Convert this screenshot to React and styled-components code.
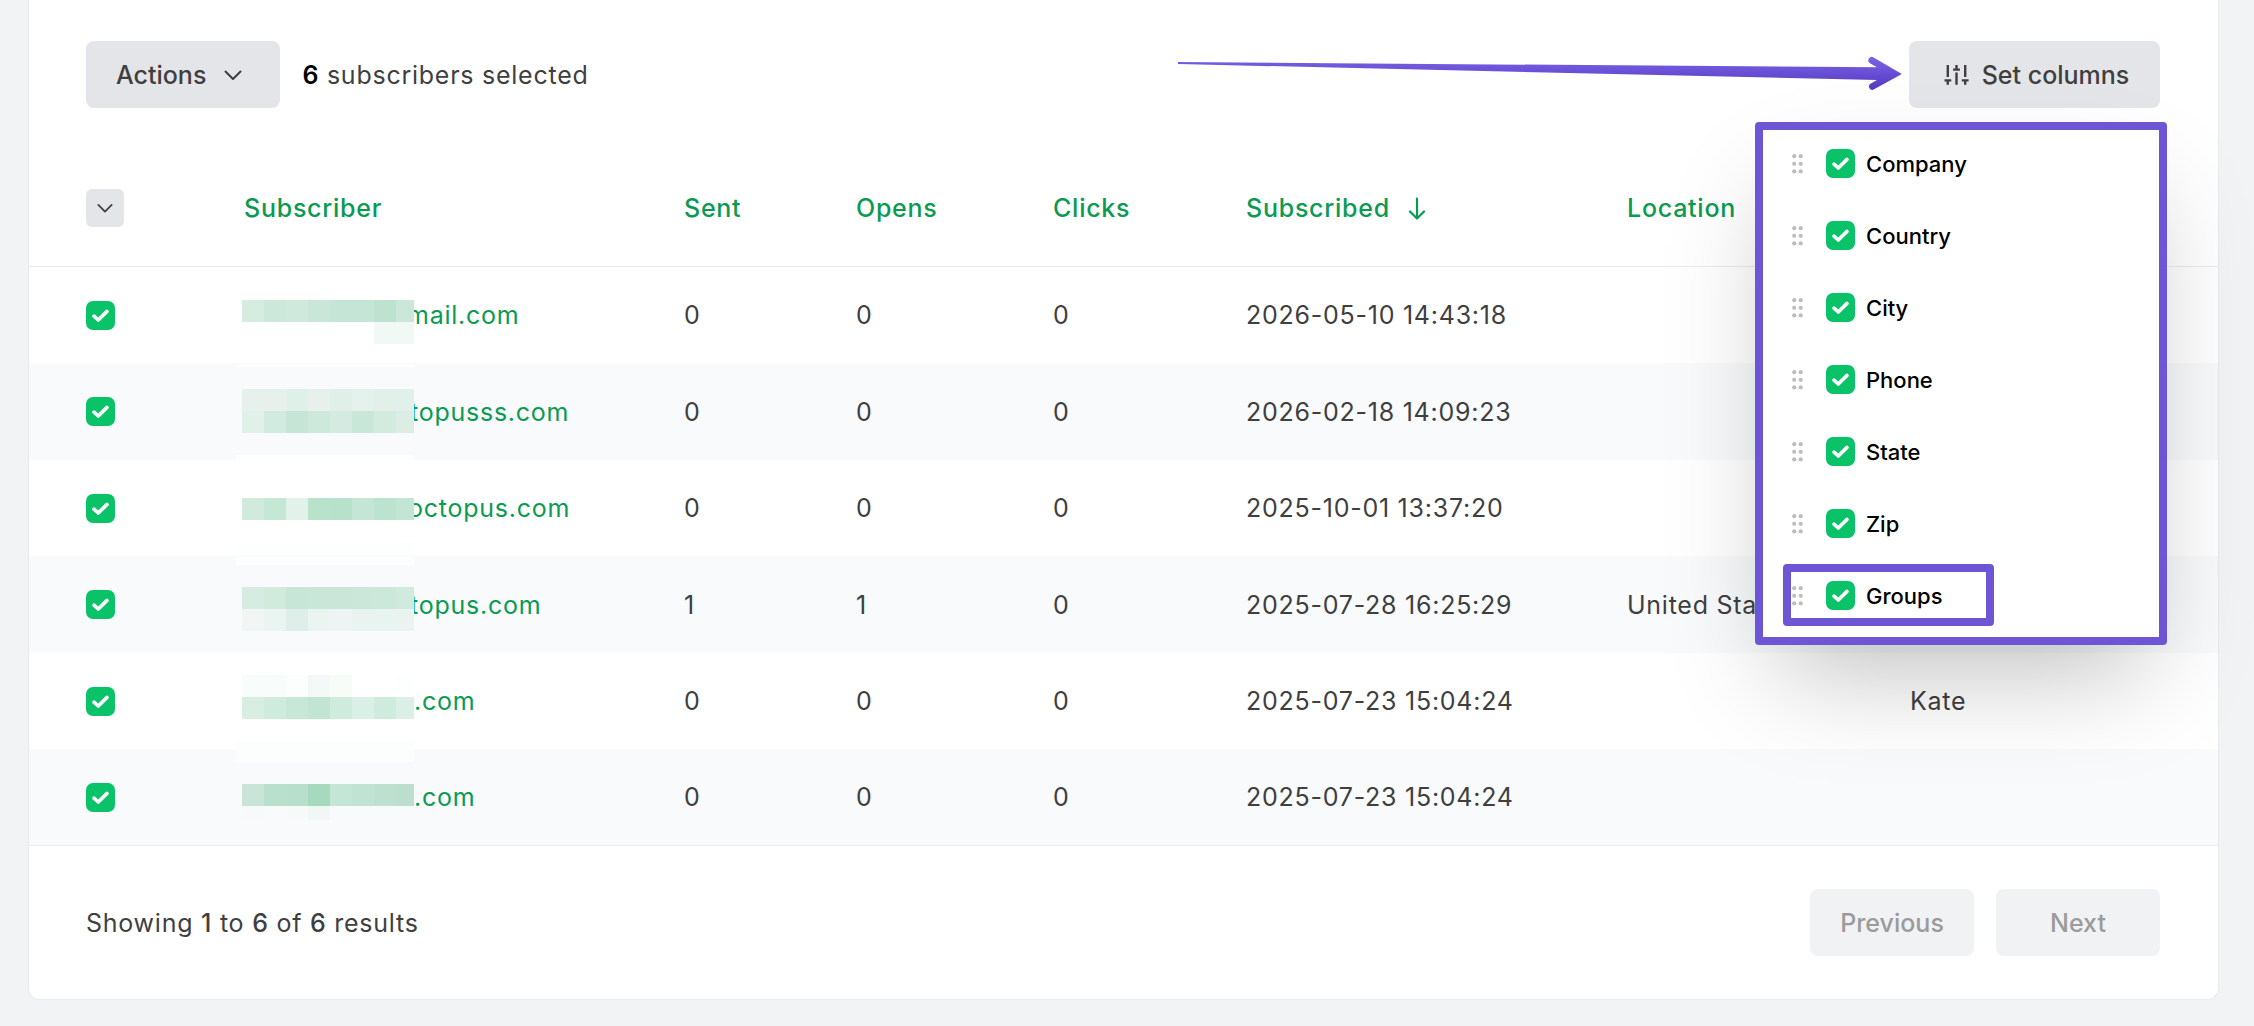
import React from "react";
import styled, { createGlobalStyle, css } from "styled-components";

const Global = createGlobalStyle`
  *, *::before, *::after { box-sizing: border-box; }
  body {
    margin: 0;
    background: #f2f3f5;
    color: #3f3f3f;
    font-family: Inter, "Liberation Sans", sans-serif;
    font-size: 25px;
    line-height: 32px;
  }
`;

const tracking = css`
  letter-spacing: 0.03em;
`;

const Page = styled.main`
  padding: 0 35px 27px 28px;
`;

const Card = styled.section`
  position: relative;
  background: #fff;
  border: 1px solid #e9eaec;
  border-top: 0;
  border-radius: 0 0 12px 12px;
`;

const Toolbar = styled.header`
  display: flex;
  align-items: center;
  justify-content: space-between;
  padding: 41px 58px 42px 57px;
`;

const Group = styled.div`
  display: flex;
  align-items: center;
  gap: 22px;
`;

const Button = styled.button`
  display: inline-flex;
  align-items: center;
  justify-content: center;
  gap: ${(p) => p.$gap || 14}px;
  height: 67px;
  min-width: ${(p) => p.$min || 164}px;
  padding: ${(p) => p.$pad || "0 30px"};
  border: 0;
  border-radius: 8px;
  background: #e4e5e9;
  color: #3f3f3f;
  font: 500 25px/32px Inter, "Liberation Sans", sans-serif;
  &:disabled {
    background: #f1f2f4;
    color: #9b9b9b;
  }
`;

const Summary = styled.p`
  margin: 0;
  ${tracking}
  strong {
    font-weight: 500;
  }
`;

const Selected = styled(Summary)`
  strong {
    font-weight: 600;
    color: #000;
  }
`;

const Table = styled.table`
  width: 100%;
  table-layout: fixed;
  border-collapse: separate;
  border-spacing: 0;
  ${tracking}
`;

const Col = styled.col`
  width: ${(p) => (p.$w ? `${p.$w}px` : "auto")};
`;

const Th = styled.th`
  height: 117px;
  padding: 0;
  border-bottom: 1px solid #e9eaec;
  text-align: left;
  font-weight: 500;
  white-space: nowrap;
  &:first-child {
    padding-left: 57px;
  }
`;

const SortLink = styled.a`
  display: inline-flex;
  align-items: center;
  gap: 18px;
  color: #0b9a52;
  text-decoration: none;
`;

const MenuToggle = styled.button`
  display: flex;
  align-items: center;
  justify-content: center;
  width: 38px;
  height: 38px;
  padding: 0;
  border: 0;
  border-radius: 6px;
  background: #e4e5e9;
  color: #3f3f3f;
`;

const Row = styled.tr`
  height: 96px;
  &:nth-child(even) {
    height: 97px;
    background: #f8fafc;
  }
  &:last-child > td {
    border-bottom: 1px solid #e9eaec;
  }
`;

const Td = styled.td`
  padding: 0;
  white-space: nowrap;
  &:first-child {
    padding-left: 57px;
  }
`;

const EmailLink = styled.a`
  position: relative;
  display: block;
  padding-left: ${(p) => p.$pad}px;
  color: #0b9a52;
  text-decoration: none;
`;

const Mosaic = styled.svg`
  position: absolute;
  left: -8px;
  top: -32px;
  width: 178px;
  height: 96px;
`;

const Check = styled.input`
  appearance: none;
  flex: none;
  display: block;
  width: 29px;
  height: 29px;
  margin: 0;
  border-radius: 7px;
  background: #0ac267
    url("data:image/svg+xml,%3Csvg xmlns='http://www.w3.org/2000/svg' viewBox='0 0 29 29'%3E%3Cpath d='M8 15.2l4.3 3.8 8.7-8.6' fill='none' stroke='white' stroke-width='3.6' stroke-linecap='round' stroke-linejoin='round'/%3E%3C/svg%3E");
`;

const Footer = styled.footer`
  display: flex;
  align-items: center;
  justify-content: space-between;
  padding: 43px 58px 43px 57px;
`;

const Popover = styled.div`
  position: absolute;
  top: 122px;
  right: 51px;
  width: 412px;
  padding: 5px 20px 13px 29px;
  border: 8px solid #6d55d6;
  border-radius: 4px;
  background: #fff;
  box-shadow: 0 50px 100px -24px rgba(0, 0, 0, 0.25);
`;

const Options = styled.ul`
  display: flex;
  flex-direction: column;
  gap: 15px;
  margin: 0;
  padding: 0;
  list-style: none;
`;

const Option = styled.li`
  position: relative;
  display: flex;
  align-items: center;
  height: 57px;
  gap: 23px;
`;

const OptionLabel = styled.label`
  display: flex;
  align-items: center;
  gap: 11px;
  color: #000;
  font-size: 22px;
  font-weight: 500;
`;

const Highlight = styled.span`
  position: absolute;
  inset: -3px auto auto -9px;
  width: 211px;
  height: 62px;
  border: 8px solid #6d55d6;
  border-radius: 4px;
  pointer-events: none;
`;

const Pointer = styled.svg`
  position: absolute;
  top: 56px;
  right: 316px;
  width: 724px;
  height: 36px;
`;

const Chevron = ({ w = 18 }) => (
  <svg width={w} height={w} viewBox="0 0 18 18" fill="none" stroke="currentColor" strokeWidth="2" strokeLinecap="round" strokeLinejoin="round" aria-hidden="true">
    <path d="M1.5 5.5 9 13l7.5-7.5" />
  </svg>
);

const ArrowDown = () => (
  <svg width="18" height="24" viewBox="0 0 18 24" fill="none" stroke="currentColor" strokeWidth="2.2" strokeLinecap="round" strokeLinejoin="round" aria-hidden="true">
    <path d="M9 2.5v20M2 15.500l7 7 7-7" />
  </svg>
);

const Sliders = () => (
  <svg width="25" height="20" viewBox="0 0 25 20" fill="none" stroke="currentColor" strokeWidth="2.4" aria-hidden="true">
    <path d="M3.800 0v12M.500 15.400h6.800M3.800 15.400v4.400M12.500 0v4M9.100 4.600h6.800M12.500 7.400v12.400M21.200 0v12M17.800 15.400h6.800M21.200 15.400v4.400" />
  </svg>
);

const Grip = () => (
  <svg width="11" height="20" viewBox="0 0 11 20" fill="#bdbdbd" aria-hidden="true">
    {[2.2, 9.8, 17.4].map((y) => (
      <g key={y}>
        <circle cx="2.200" cy={y} r="2.100" />
        <circle cx="8.700" cy={y} r="2.100" />
      </g>
    ))}
  </svg>
);

/* Each subscriber address is partly masked by bands of 22px tiles. */
const rows = [
  {
    email: "mail.com", pad: 163, sent: 0, opens: 0, clicks: 0, date: "2026-05-10 14:43:18",
    bands: [
      { y: 33, c: ["#d5ece0", "#cce8da", "#cfe9dc", "#c9e6d8", "#c5e6d6", "#c5e6d6", "#bfe2d0", "#cae7d9"] },
      { y: 55, c: [0, 0, 0, 0, 0, 0, "#f1f8f5", "#f1f9f5"] },
    ],
  },
  {
    email: "topusss.com", pad: 166, sent: 0, opens: 0, clicks: 0, date: "2026-02-18 14:09:23",
    bands: [
      { y: 0, h: 3, c: "#fefefe" },
      { y: 25, c: ["#e6f0ed", "#e7f0eb", "#dff0e8", "#e8f0ee", "#e0f0e9", "#e4f1ec", "#e3f0e9", "#e0f0ea"] },
      { y: 47, c: ["#e1f0e8", "#d2eadf", "#c7e5d6", "#cee8dc", "#d5ebe1", "#c9e7d9", "#d3eadf", "#dbede5"] },
      { y: 91, h: 6, c: "#fefefe" },
    ],
  },
  {
    email: "octopus.com", pad: 164, sent: 0, opens: 0, clicks: 0, date: "2025-10-01 13:37:20",
    bands: [
      { y: 38, c: ["#d0ebde", "#c5e7d6", "#e2f2ea", "#b9e2cd", "#b8e1cb", "#c5e6d6", "#bbe3cf", "#c3e5d5"] },
      { y: 82, h: 14, c: "#fcfffd" },
    ],
  },
  {
    email: "topus.com", pad: 166, sent: 1, opens: 1, clicks: 0, date: "2025-07-28 16:25:29", location: "United States",
    bands: [
      { y: 0, h: 8, c: "#fcfffd" },
      { y: 30, c: ["#d6ece2", "#d1eadc", "#c8e6d7", "#cae6d8", "#c9e6d8", "#cae7d9", "#cce8da", "#d0eade"] },
      { y: 52, c: ["#f1f6f5", "#eaf4f0", "#deeee8", "#eaf4f1", "#eef4f3", "#e9f4f0", "#e8f4f0", "#e9f4f0"] },
    ],
  },
  {
    email: ".com", pad: 170, sent: 0, opens: 0, clicks: 0, date: "2025-07-23 15:04:24", extra: "Kate",
    bands: [
      { y: 22, c: ["#f8fdfb", "#f8fdfb", "#fcfefd", "#f2f9f6", "#f7fcf9", 0, 0, "#fdfefe"] },
      { y: 44, c: ["#d8eee3", "#cfebdd", "#c7e7d7", "#c1e4d3", "#cfebdd", "#daefe5", "#cfebdd", "#daefe5"] },
      { y: 88, h: 8, c: "#fcfefd" },
    ],
  },
  {
    email: ".com", pad: 170, sent: 0, opens: 0, clicks: 0, date: "2025-07-23 15:04:24",
    bands: [
      { y: 0, h: 13, c: "#fcfefd" },
      { y: 35, c: ["#c8e5d8", "#b9dfcd", "#b8dfcc", "#a7d9c1", "#c4e6d6", "#c1e3d4", "#bde0d0", "#bbdecd"] },
      { y: 57, h: 14, c: ["#f7fafb", 0, "#f8faf9", "#f0f7f5", 0, 0, 0, 0] },
    ],
  },
];

const Mask = ({ bands }) => (
  <Mosaic viewBox="0 0 178 96" shapeRendering="crispEdges" aria-hidden="true">
    {bands.map((b) =>
      typeof b.c === "string" ? (
        <rect key={b.y} x="0" y={b.y} width="178" height={b.h} fill={b.c} />
      ) : (
        b.c.map((c, i) =>
          c ? <rect key={`${b.y}-${i}`} x={6 + i * 22} y={b.y} width={i === 7 ? 18 : 22} height={b.h || 22} fill={c} /> : null
        )
      )
    )}
  </Mosaic>
);

const columns = ["Company", "Country", "City", "Phone", "State", "Zip", "Groups"];

export default function App() {
  return (
    <>
      <Global />
      <Page>
        <Card>
          <Toolbar>
            <Group>
              <Button type="button" $min={194} $gap={18} $pad="0 38px 0 30px">
                Actions <Chevron />
              </Button>
              <Selected>
                <strong>6</strong> subscribers selected
              </Selected>
            </Group>
            <Button type="button" $min={251} $gap={13} $pad="0 30px 0 34px">
              <Sliders /> Set columns
            </Button>
          </Toolbar>

          <Table>
            <colgroup>
              <Col $w={215} />
              <Col $w={440} />
              <Col $w={172} />
              <Col $w={197} />
              <Col $w={193} />
              <Col $w={381} />
              <Col $w={283} />
              <Col />
            </colgroup>
            <thead>
              <tr>
                <Th>
                  <MenuToggle type="button" aria-label="Selection menu">
                    <Chevron w={16} />
                  </MenuToggle>
                </Th>
                <Th><SortLink href="#subscriber">Subscriber</SortLink></Th>
                <Th><SortLink href="#sent">Sent</SortLink></Th>
                <Th><SortLink href="#opens">Opens</SortLink></Th>
                <Th><SortLink href="#clicks">Clicks</SortLink></Th>
                <Th><SortLink href="#subscribed">Subscribed <ArrowDown /></SortLink></Th>
                <Th><SortLink href="#location">Location</SortLink></Th>
                <Th />
              </tr>
            </thead>
            <tbody>
              {rows.map((r, i) => (
                <Row key={i}>
                  <Td><Check type="checkbox" defaultChecked aria-label={`Select subscriber ${i + 1}`} /></Td>
                  <Td>
                    <EmailLink href="#profile" $pad={r.pad}>
                      {r.email}
                      <Mask bands={r.bands} />
                    </EmailLink>
                  </Td>
                  <Td>{r.sent}</Td>
                  <Td>{r.opens}</Td>
                  <Td>{r.clicks}</Td>
                  <Td>{r.date}</Td>
                  <Td>{r.location}</Td>
                  <Td>{r.extra}</Td>
                </Row>
              ))}
            </tbody>
          </Table>

          <Footer>
            <Summary>
              Showing <strong>1</strong> to <strong>6</strong> of <strong>6</strong> results
            </Summary>
            <Group>
              <Button type="button" disabled>Previous</Button>
              <Button type="button" disabled>Next</Button>
            </Group>
          </Footer>

          <Popover>
            <Options>
              {columns.map((name) => (
                <Option key={name}>
                  <Grip />
                  <OptionLabel>
                    <Check type="checkbox" defaultChecked />
                    {name}
                  </OptionLabel>
                  {name === "Groups" && <Highlight />}
                </Option>
              ))}
            </Options>
          </Popover>

          <Pointer viewBox="0 0 724 36" aria-hidden="true">
            <defs>
              <linearGradient id="shaft" x1="0" y1="0" x2="0" y2="1">
                <stop offset="0" stopColor="#7a63e8" />
                <stop offset="1" stopColor="#5539bf" />
              </linearGradient>
            </defs>
            <path
              d="M0 6L699 11.300L692 7.200A3.400 3.400 0 0 1 695.600 1.400L723 17.500Q724 18 723 18.600L695.600 33.600A3.400 3.400 0 0 1 692 28L699 24L0 8Z"
              fill="url(#shaft)"
            />
          </Pointer>
        </Card>
      </Page>
    </>
  );
}
